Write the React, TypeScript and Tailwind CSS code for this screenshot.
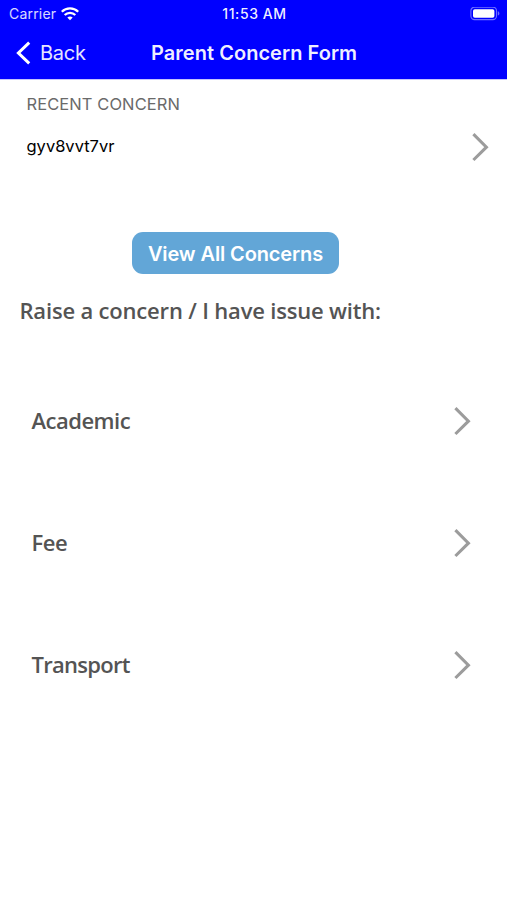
interface ChevronProps {
  className?: string;
}

const categories = [
  { label: 'Academic', tracking: 'tracking-[-0.5px]' },
  { label: 'Fee', tracking: 'tracking-[-0.4px]' },
  { label: 'Transport', tracking: 'tracking-[-0.72px]' },
];

function Chevron({ className = '' }: ChevronProps) {
  return (
    <svg viewBox="0 0 18 30" className={`h-[30px] w-[18px] shrink-0 ${className}`} fill="none">
      <path d="M2.4 2.2L15.4 15.2L2.4 28" stroke="#9c9c9c" strokeWidth="3.1" />
    </svg>
  );
}

function WifiIcon() {
  return (
    <svg viewBox="0 0 18 14" className="h-[14px] w-[18px]" fill="none" stroke="white" strokeWidth="2.3">
      <path d="M0.8 4.8C5.4 0.2 12.6 0.2 17.2 4.8" />
      <path d="M3.7 8C6.6 5.1 11.4 5.1 14.3 8" />
      <path d="M6.3 10.5C7.9 9 10.1 9 11.7 10.5L9 13.2Z" fill="white" stroke="none" />
    </svg>
  );
}

function BatteryIcon() {
  return (
    <svg viewBox="0 0 30 14" className="h-[14px] w-[30px]" fill="none">
      <rect x="0.9" y="0.2" width="25.6" height="12.4" rx="3.6" stroke="#7070ff" strokeWidth="1.1" />
      <rect x="3" y="2.2" width="21.4" height="8.6" rx="1.8" fill="white" />
      <path d="M27.8 4.2C29.9 4.9 29.9 7.9 27.8 8.6Z" fill="#7070ff" />
    </svg>
  );
}

function StatusBar() {
  return (
    <div className="grid h-[27px] grid-cols-3 items-center pl-[9px] pr-[7px]">
      <div className="flex items-center gap-[5px]">
        <span className="text-[14px] leading-[27px] tracking-[0.2px] text-white/85">Carrier</span>
        <WifiIcon />
      </div>
      <span className="text-center text-[14px] font-medium leading-[27px] tracking-[0.6px] text-white/95">
        11:53 AM
      </span>
      <div className="flex justify-end">
        <BatteryIcon />
      </div>
    </div>
  );
}

function NavBar() {
  return (
    <div className="flex h-[52px] items-center pb-[1px] pl-4">
      <button type="button" className="flex w-[135px] items-center gap-[8px] text-white">
        <svg viewBox="0 0 16 24" className="h-[24px] w-[16px]" fill="none">
          <path d="M13.2 1.6L2.4 12L13.2 22.4" stroke="white" strokeWidth="3" />
        </svg>
        <span className="text-[20px] leading-[30px] tracking-[-0.25px] text-white/90">Back</span>
      </button>
      <h1 className="text-[20px] font-semibold leading-[30px] tracking-[0.04px] text-white/95">
        Parent Concern Form
      </h1>
    </div>
  );
}

export default function App() {
  return (
    <div className="flex h-[900px] w-[507px] flex-col overflow-hidden bg-white font-['Inter',sans-serif]">
      <header className="border-b border-[#c4c4ff] bg-[#0000ff]">
        <StatusBar />
        <NavBar />
      </header>

      <main className="flex flex-col">
        <section className="flex h-[152px] flex-col pl-[26.5px] pr-[18.5px]">
          <h2 className="pt-[12px] text-[16.5px] leading-[24px] tracking-[0.08px] text-[#6a6a6a]">RECENT CONCERN</h2>
          <div className="flex h-[61px] items-center justify-between">
            <span className="text-[16.5px] text-black">gyv8vvt7vr</span>
            <Chevron />
          </div>
        </section>

        <button
          type="button"
          className="ml-[132px] flex h-[42px] w-[207px] items-center justify-center whitespace-nowrap rounded-[11px] bg-[#62a6d7] pt-[1px] text-[20px] font-semibold tracking-[-0.12px] text-white"
        >
          View All Concerns
        </button>

        <h2 className="mt-[19px] whitespace-nowrap pl-[19.5px] font-['Open_Sans','Noto_Sans',sans-serif] text-[22px] font-semibold leading-[34px] tracking-[-0.18px] text-[#545454]">
          Raise a concern / I have issue with:
        </h2>

        <ul className="mt-[33px]">
          {categories.map(({ label, tracking }) => (
            <li key={label} className="flex h-[122px] items-center justify-between pl-[31.5px] pr-[36.5px]">
              <span className={`pb-[1px] font-['Open_Sans','Noto_Sans',sans-serif] text-[22px] font-semibold text-[#545454] ${tracking}`}>
                {label}
              </span>
              <Chevron />
            </li>
          ))}
        </ul>
      </main>
    </div>
  );
}
